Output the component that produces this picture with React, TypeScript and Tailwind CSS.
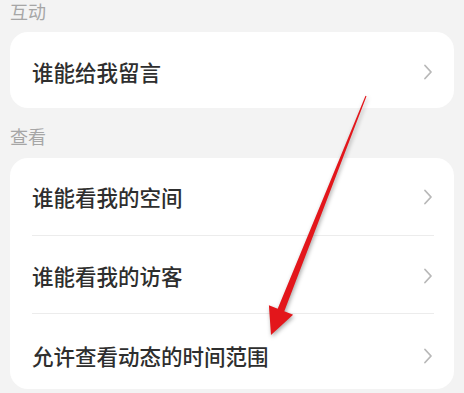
const font = { fontFamily: '"Noto Sans CJK SC", "Noto Sans", sans-serif' };

function Chevron() {
  return (
    <svg width="10" height="16" viewBox="0 0 10 16" fill="none" className="shrink-0">
      <polyline points="2,1.5 8,8 2,14.5" stroke="#b8b8b8" strokeWidth="1.8" strokeLinecap="round" strokeLinejoin="round" />
    </svg>
  );
}

type Row = { title: string; h: string; pt: string };

function Card({ rows }: { rows: Row[] }) {
  return (
    <div className="rounded-[18px] bg-white">
      {rows.map((r, i) => (
        <div key={r.title} className={i > 0 ? "ml-[22px] mr-[20px] border-t border-[#ececec]" : "ml-[22px] mr-[20px]"}>
          <div className={`flex items-center justify-between pr-[1px] ${r.h} ${r.pt}`}>
            <span className="text-[21.5px] font-medium leading-none text-[#2e2e2e]">{r.title}</span>
            <Chevron />
          </div>
        </div>
      ))}
    </div>
  );
}

export default function App() {
  return (
    <div className="relative h-[393px] w-[464px] overflow-hidden bg-[#f3f3f3] px-[10px]" style={font}>
      <p className="text-[18px] leading-[22px] text-[#a6a6a6]">互动</p>
      <div className="mt-[10px]">
        <Card rows={[{ title: "谁能给我留言", h: "h-[76px]", pt: "pt-[3px]" }]} />
      </div>
      <p className="mt-[17px] text-[18px] leading-[22px] text-[#a6a6a6]">查看</p>
      <div className="mt-[11px]">
        <Card
          rows={[
            { title: "谁能看我的空间", h: "h-[77px]", pt: "pt-0" },
            { title: "谁能看我的访客", h: "h-[77px]", pt: "pt-[3px]" },
            { title: "允许查看动态的时间范围", h: "h-[75px]", pt: "pt-[8px]" },
          ]}
        />
      </div>

      {/* red annotation arrow */}
      <svg
        className="pointer-events-none absolute left-0 top-0 drop-shadow-[1px_2px_2px_rgba(0,0,0,0.35)]"
        width="464"
        height="393"
        viewBox="0 0 464 393"
      >
        <polygon
          points="365.5,95.8 277.7,308.7 268.9,305.2 271,335 293.1,314.8 284.3,311.3 366.5,96.2"
          fill="#e3161b"
        />
      </svg>
    </div>
  );
}
